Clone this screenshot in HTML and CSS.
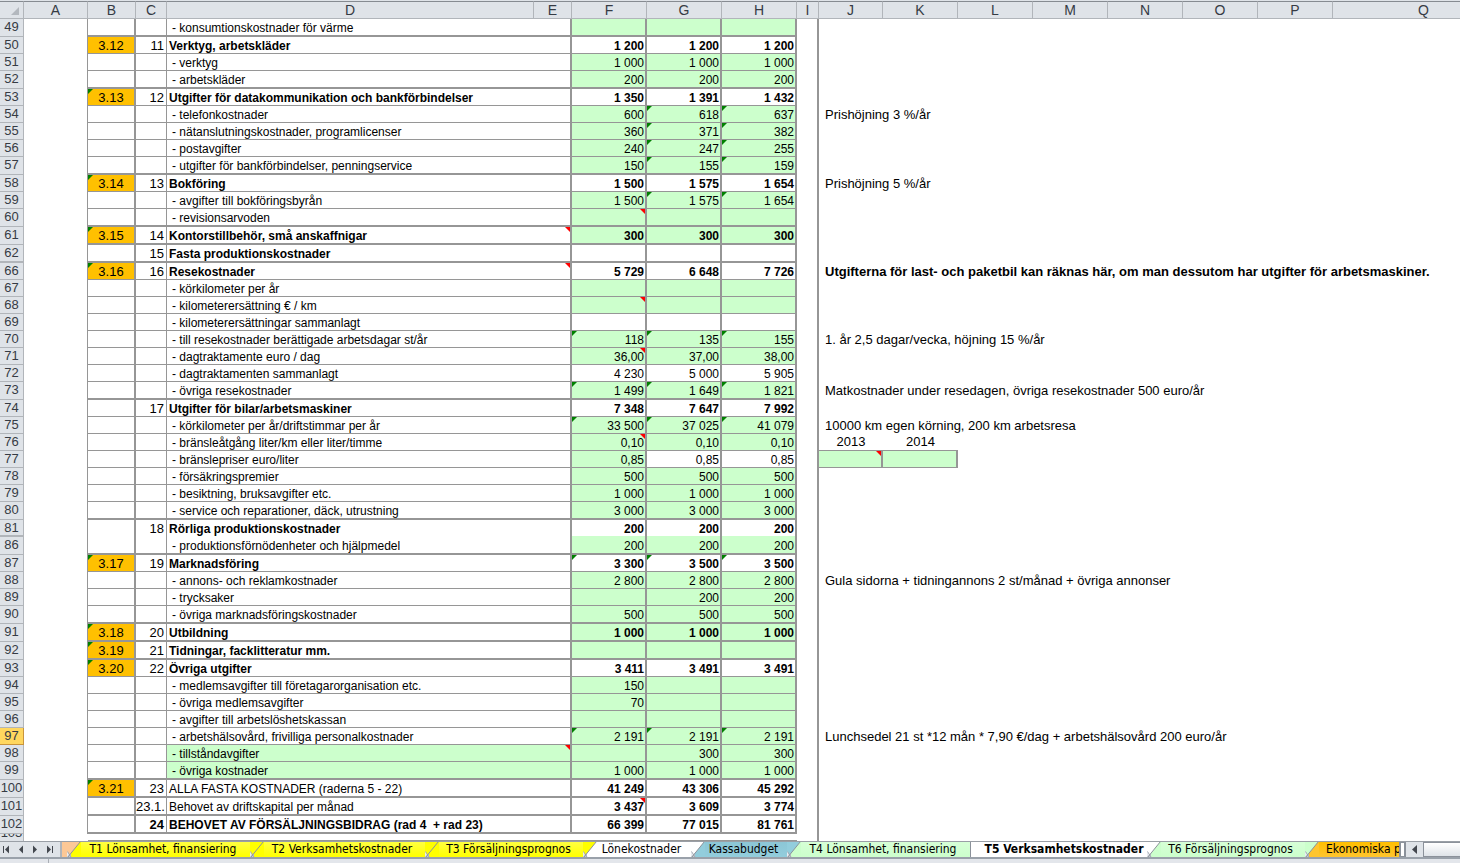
FILE: index.html
```html
<!DOCTYPE html>
<html lang="sv">
<head>
<meta charset="utf-8">
<title>T5 Verksamhetskostnader</title>
<link rel="stylesheet" href="styles.css">
</head>
<body>
<main class="sheet">
<table class="grid">
<colgroup>
<col class="w-row"><col class="w-a"><col class="w-b"><col class="w-c"><col class="w-d"><col class="w-e"><col class="w-n"><col class="w-n"><col class="w-n"><col class="w-i"><col class="w-a"><col class="w-n"><col class="w-n"><col class="w-n"><col class="w-n"><col class="w-n"><col class="w-n"><col>
</colgroup>
<thead>
<tr><th class="corner"><svg width="8" height="8" viewBox="0 0 8 8" aria-hidden="true"><path d="M8 0V8H0Z" fill="#b3b8be"/></svg></th><th scope="col">A</th><th scope="col">B</th><th scope="col">C</th><th scope="col">D</th><th scope="col">E</th><th scope="col">F</th><th scope="col">G</th><th scope="col">H</th><th scope="col">I</th><th scope="col">J</th><th scope="col">K</th><th scope="col">L</th><th scope="col">M</th><th scope="col">N</th><th scope="col">O</th><th scope="col">P</th><th scope="col" class="col-q">Q</th></tr>
</thead>
<tbody>
<tr class="thick"><th scope="row">49</th><td></td><td></td><td></td><td colspan="2">- konsumtionskostnader för värme</td><td class="in"></td><td class="in"></td><td class="in"></td><td></td><td colspan="8"></td></tr>
<tr class="head"><th scope="row">50</th><td></td><td class="ref">3.12</td><td>11</td><td colspan="2">Verktyg, arbetskläder</td><td>1 200</td><td>1 200</td><td>1 200</td><td></td><td colspan="8"></td></tr>
<tr><th scope="row">51</th><td></td><td></td><td></td><td colspan="2">- verktyg</td><td class="in">1 000</td><td class="in">1 000</td><td class="in">1 000</td><td></td><td colspan="8"></td></tr>
<tr class="thick"><th scope="row">52</th><td></td><td></td><td></td><td colspan="2">- arbetskläder</td><td class="in">200</td><td class="in">200</td><td class="in">200</td><td></td><td colspan="8"></td></tr>
<tr class="head"><th scope="row">53</th><td></td><td class="ref flag">3.13</td><td>12</td><td colspan="2">Utgifter för datakommunikation och bankförbindelser</td><td>1 350</td><td>1 391</td><td>1 432</td><td></td><td colspan="8"></td></tr>
<tr><th scope="row">54</th><td></td><td></td><td></td><td colspan="2">- telefonkostnader</td><td class="in">600</td><td class="in flag">618</td><td class="in flag">637</td><td></td><td colspan="8">Prishöjning 3 %/år</td></tr>
<tr><th scope="row">55</th><td></td><td></td><td></td><td colspan="2">- nätanslutningskostnader, programlicenser</td><td class="in">360</td><td class="in flag">371</td><td class="in flag">382</td><td></td><td colspan="8"></td></tr>
<tr><th scope="row">56</th><td></td><td></td><td></td><td colspan="2">- postavgifter</td><td class="in">240</td><td class="in flag">247</td><td class="in flag">255</td><td></td><td colspan="8"></td></tr>
<tr class="thick"><th scope="row">57</th><td></td><td></td><td></td><td colspan="2">- utgifter för bankförbindelser, penningservice</td><td class="in">150</td><td class="in flag">155</td><td class="in flag">159</td><td></td><td colspan="8"></td></tr>
<tr class="head"><th scope="row">58</th><td></td><td class="ref flag">3.14</td><td>13</td><td colspan="2">Bokföring</td><td>1 500</td><td>1 575</td><td>1 654</td><td></td><td colspan="8">Prishöjning 5 %/år</td></tr>
<tr><th scope="row">59</th><td></td><td></td><td></td><td colspan="2">- avgifter till bokföringsbyrån</td><td class="in">1 500</td><td class="in flag">1 575</td><td class="in flag">1 654</td><td></td><td colspan="8"></td></tr>
<tr class="thick"><th scope="row">60</th><td></td><td></td><td></td><td colspan="2">- revisionsarvoden</td><td class="in note"></td><td class="in"></td><td class="in"></td><td></td><td colspan="8"></td></tr>
<tr class="head thick"><th scope="row">61</th><td></td><td class="ref flag">3.15</td><td>14</td><td colspan="2" class="note">Kontorstillbehör, små anskaffnigar</td><td class="in">300</td><td class="in">300</td><td class="in">300</td><td></td><td colspan="8"></td></tr>
<tr class="head thick gap"><th scope="row">62</th><td></td><td></td><td>15</td><td colspan="2">Fasta produktionskostnader</td><td></td><td></td><td></td><td></td><td colspan="8"></td></tr>
<tr class="head"><th scope="row">66</th><td></td><td class="ref flag">3.16</td><td>16</td><td colspan="2" class="note">Resekostnader</td><td>5 729</td><td>6 648</td><td>7 726</td><td></td><td colspan="8" class="strong">Utgifterna för last- och paketbil kan räknas här, om man dessutom har utgifter för arbetsmaskiner.</td></tr>
<tr><th scope="row">67</th><td></td><td></td><td></td><td colspan="2">- körkilometer per år</td><td class="in"></td><td class="in"></td><td class="in"></td><td></td><td colspan="8"></td></tr>
<tr><th scope="row">68</th><td></td><td></td><td></td><td colspan="2">- kilometerersättning € / km</td><td class="in note"></td><td class="in"></td><td class="in"></td><td></td><td colspan="8"></td></tr>
<tr><th scope="row">69</th><td></td><td></td><td></td><td colspan="2">- kilometerersättningar sammanlagt</td><td></td><td></td><td></td><td></td><td colspan="8"></td></tr>
<tr><th scope="row">70</th><td></td><td></td><td></td><td colspan="2">- till resekostnader berättigade arbetsdagar st/år</td><td class="in flag">118</td><td class="in flag">135</td><td class="in flag">155</td><td></td><td colspan="8">1. år 2,5 dagar/vecka, höjning 15 %/år</td></tr>
<tr><th scope="row">71</th><td></td><td></td><td></td><td colspan="2">- dagtraktamente euro / dag</td><td class="in note">36,00</td><td class="in">37,00</td><td class="in">38,00</td><td></td><td colspan="8"></td></tr>
<tr><th scope="row">72</th><td></td><td></td><td></td><td colspan="2">- dagtraktamenten sammanlagt</td><td>4 230</td><td>5 000</td><td>5 905</td><td></td><td colspan="8"></td></tr>
<tr class="thick"><th scope="row">73</th><td></td><td></td><td></td><td colspan="2">- övriga resekostnader</td><td class="in flag">1 499</td><td class="in flag">1 649</td><td class="in flag">1 821</td><td></td><td colspan="8">Matkostnader under resedagen, övriga resekostnader 500 euro/år</td></tr>
<tr class="head"><th scope="row">74</th><td></td><td></td><td>17</td><td colspan="2">Utgifter för bilar/arbetsmaskiner</td><td>7 348</td><td>7 647</td><td>7 992</td><td></td><td colspan="8"></td></tr>
<tr><th scope="row">75</th><td></td><td></td><td></td><td colspan="2">- körkilometer per år/driftstimmar per år</td><td class="in flag">33 500</td><td class="in flag">37 025</td><td class="in flag">41 079</td><td></td><td colspan="8">10000 km egen körning, 200 km arbetsresa</td></tr>
<tr><th scope="row">76</th><td></td><td></td><td></td><td colspan="2">- bränsleåtgång liter/km eller liter/timme</td><td class="in note">0,10</td><td class="in">0,10</td><td class="in">0,10</td><td></td><td class="year">2013</td><td class="year">2014</td><td colspan="6"></td></tr>
<tr><th scope="row">77</th><td></td><td></td><td></td><td colspan="2">- bränslepriser euro/liter</td><td class="in">0,85</td><td>0,85</td><td>0,85</td><td></td><td class="in boxed note"></td><td class="in boxed"></td><td colspan="6"></td></tr>
<tr><th scope="row">78</th><td></td><td></td><td></td><td colspan="2">- försäkringspremier</td><td class="in">500</td><td class="in">500</td><td class="in">500</td><td></td><td colspan="8"></td></tr>
<tr><th scope="row">79</th><td></td><td></td><td></td><td colspan="2">- besiktning, bruksavgifter etc.</td><td class="in">1 000</td><td class="in">1 000</td><td class="in">1 000</td><td></td><td colspan="8"></td></tr>
<tr class="thick"><th scope="row">80</th><td></td><td></td><td></td><td colspan="2">- service och reparationer, däck, utrustning</td><td class="in">3 000</td><td class="in">3 000</td><td class="in">3 000</td><td></td><td colspan="8"></td></tr>
<tr class="head gap open"><th scope="row">81</th><td></td><td></td><td>18</td><td colspan="2">Rörliga produktionskostnader</td><td>200</td><td>200</td><td>200</td><td></td><td colspan="8"></td></tr>
<tr class="thick"><th scope="row">86</th><td></td><td></td><td></td><td colspan="2">- produktionsförnödenheter och hjälpmedel</td><td class="in">200</td><td class="in">200</td><td class="in">200</td><td></td><td colspan="8"></td></tr>
<tr class="head"><th scope="row">87</th><td></td><td class="ref flag">3.17</td><td>19</td><td colspan="2">Marknadsföring</td><td class="flag">3 300</td><td class="flag">3 500</td><td class="flag">3 500</td><td></td><td colspan="8"></td></tr>
<tr><th scope="row">88</th><td></td><td></td><td></td><td colspan="2">- annons- och reklamkostnader</td><td class="in">2 800</td><td class="in">2 800</td><td class="in">2 800</td><td></td><td colspan="8">Gula sidorna + tidningannons 2 st/månad + övriga annonser</td></tr>
<tr><th scope="row">89</th><td></td><td></td><td></td><td colspan="2">- trycksaker</td><td class="in"></td><td class="in">200</td><td class="in">200</td><td></td><td colspan="8"></td></tr>
<tr class="thick"><th scope="row">90</th><td></td><td></td><td></td><td colspan="2">- övriga marknadsföringskostnader</td><td class="in">500</td><td class="in">500</td><td class="in">500</td><td></td><td colspan="8"></td></tr>
<tr class="head thick"><th scope="row">91</th><td></td><td class="ref flag">3.18</td><td>20</td><td colspan="2">Utbildning</td><td class="in">1 000</td><td class="in">1 000</td><td class="in">1 000</td><td></td><td colspan="8"></td></tr>
<tr class="head thick"><th scope="row">92</th><td></td><td class="ref flag">3.19</td><td>21</td><td colspan="2">Tidningar, facklitteratur mm.</td><td class="in"></td><td class="in"></td><td class="in"></td><td></td><td colspan="8"></td></tr>
<tr class="head"><th scope="row">93</th><td></td><td class="ref flag">3.20</td><td>22</td><td colspan="2">Övriga utgifter</td><td>3 411</td><td>3 491</td><td>3 491</td><td></td><td colspan="8"></td></tr>
<tr><th scope="row">94</th><td></td><td></td><td></td><td colspan="2">- medlemsavgifter till företagarorganisation etc.</td><td class="in">150</td><td class="in"></td><td class="in"></td><td></td><td colspan="8"></td></tr>
<tr><th scope="row">95</th><td></td><td></td><td></td><td colspan="2">- övriga medlemsavgifter</td><td class="in">70</td><td class="in"></td><td class="in"></td><td></td><td colspan="8"></td></tr>
<tr><th scope="row">96</th><td></td><td></td><td></td><td colspan="2">- avgifter till arbetslöshetskassan</td><td class="in"></td><td class="in"></td><td class="in"></td><td></td><td colspan="8"></td></tr>
<tr class="current"><th scope="row">97</th><td></td><td></td><td></td><td colspan="2">- arbetshälsovård, frivilliga personalkostnader</td><td class="in flag">2 191</td><td class="in flag">2 191</td><td class="in flag">2 191</td><td></td><td colspan="8">Lunchsedel 21 st *12 mån * 7,90 €/dag + arbetshälsovård 200 euro/år</td></tr>
<tr><th scope="row">98</th><td></td><td></td><td></td><td colspan="2" class="in note">- tillståndavgifter</td><td class="in"></td><td class="in">300</td><td class="in">300</td><td></td><td colspan="8"></td></tr>
<tr class="thick"><th scope="row">99</th><td></td><td></td><td></td><td colspan="2" class="in">- övriga kostnader</td><td class="in">1 000</td><td class="in">1 000</td><td class="in">1 000</td><td></td><td colspan="8"></td></tr>
<tr class="head plain thick"><th scope="row">100</th><td></td><td class="ref flag">3.21</td><td>23</td><td colspan="2">ALLA FASTA KOSTNADER (raderna 5 - 22)</td><td>41 249</td><td>43 306</td><td>45 292</td><td></td><td colspan="8"></td></tr>
<tr class="head plain thick"><th scope="row">101</th><td></td><td></td><td>23.1.</td><td colspan="2">Behovet av driftskapital per månad</td><td class="note">3 437</td><td>3 609</td><td>3 774</td><td></td><td colspan="8"></td></tr>
<tr class="head thick"><th scope="row">102</th><td></td><td></td><td class="strong">24</td><td colspan="2">BEHOVET AV FÖRSÄLJNINGSBIDRAG (rad 4 &nbsp;+ rad 23)</td><td>66 399</td><td>77 015</td><td>81 761</td><td></td><td colspan="8"></td></tr>
<tr class="short"><th scope="row"><span>103</span></th><td></td><td></td><td></td><td colspan="2"></td><td></td><td></td><td></td><td></td><td colspan="8"></td></tr>
</tbody>
</table>
</main>

<svg class="defs" width="0" height="0" aria-hidden="true">
<defs>
<symbol id="edge" viewBox="0 0 14 15"><path d="M14 0V15H1L13 0Z"/><path d="M0 9L0 15H3Z" fill="#e8ecf1"/><path d="M0 15L4 11V15Z" fill="#c5cbd3"/><path d="M.5 9.500L4 15" stroke="#a3a9b2" fill="none"/><path d="M.5 15.500L13.500-.5" stroke="#8b919a" fill="none"/></symbol>
</defs>
</svg>

<nav class="tabbar" aria-label="Kalkylblad">
<div class="arrows">
<button type="button" aria-label="Första bladet"><svg width="8" height="9" viewBox="0 0 8 9"><path d="M1.500 1V8" stroke="#43474e"/><path d="M3 4.500L7 .5V8.500Z"/></svg></button>
<button type="button" aria-label="Föregående blad"><svg width="8" height="9" viewBox="0 0 8 9"><path d="M2 4.500L6 .5V8.500Z"/></svg></button>
<button type="button" aria-label="Nästa blad"><svg width="8" height="9" viewBox="0 0 8 9"><path d="M6 4.500L2 .5V8.500Z"/></svg></button>
<button type="button" aria-label="Sista bladet"><svg width="8" height="9" viewBox="0 0 8 9"><path d="M6.500 1V8" stroke="#43474e"/><path d="M5 4.500L1 .5V8.500Z"/></svg></button>
</div>
<div class="tabs">
<span class="tab-rest peach"></span>
<button type="button" class="tab yellow after-peach t1"><svg class="edge"><use href="#edge"/></svg><span>T1 Lönsamhet, finansiering</span></button>
<button type="button" class="tab yellow after-yellow t2"><svg class="edge"><use href="#edge"/></svg><span>T2 Verksamhetskostnader</span></button>
<button type="button" class="tab yellow after-yellow t3"><svg class="edge"><use href="#edge"/></svg><span>T3 Försäljningsprognos</span></button>
<button type="button" class="tab white after-yellow t-lon"><svg class="edge"><use href="#edge"/></svg><span>Lönekostnader</span></button>
<button type="button" class="tab blue after-white t-kassa"><svg class="edge"><use href="#edge"/></svg><span>Kassabudget</span></button>
<button type="button" class="tab green after-blue t4"><svg class="edge"><use href="#edge"/></svg><span>T4 Lönsamhet, finansiering</span></button>
<button type="button" class="tab white active t5" aria-current="page"><span>T5 Verksamhetskostnader</span></button>
<button type="button" class="tab green after-white t6"><svg class="edge"><use href="#edge"/></svg><span>T6 Försäljningsprognos</span></button>
<button type="button" class="tab orange after-green t-eko"><svg class="edge"><use href="#edge"/></svg><span>Ekonomiska p</span></button>
</div>
<div class="scroller">
<span class="splitter"></span>
<button type="button" class="scroll-left" aria-label="Rulla åt vänster"><svg width="8" height="9" viewBox="0 0 8 9"><path d="M1 4.500L6 0V9Z"/></svg></button>
<span class="thumb"></span>
</div>
</nav>
<footer class="status"><span class="status-cell"></span></footer>
</body>
</html>
```
FILE: styles.css
```css
* { box-sizing: border-box; }

body {
  margin: 0;
  height: 100vh;
  display: flex;
  flex-direction: column;
  overflow: hidden;
  background: #fff;
  color: #000;
  font: 12px/16px "Liberation Sans", Arial, sans-serif;
}

button {
  border: 0;
  padding: 0;
  background: none;
  color: inherit;
  font: inherit;
}

.sheet {
  flex: 1;
  min-height: 0;
  overflow: hidden;
  border-top: 1px solid #dfe3e8;
}

/* Grid */
.grid {
  width: 100%;
  table-layout: fixed;
  border-collapse: separate;
  border-spacing: 0;
}

.w-row { width: 24px; }
.w-a { width: 64px; }
.w-b { width: 48px; }
.w-c { width: 31px; }
.w-d { width: 367px; }
.w-e { width: 38px; }
.w-n { width: 75px; }
.w-i { width: 22px; }

th {
  padding: 0;
  background: #dfe3e8;
  border-right: 1px solid #b1b5ba;
  border-bottom: 1px solid #b1b5ba;
  color: #363b44;
  font-size: 14px;
  font-weight: 400;
}

thead th {
  height: 18px;
  border-top: 1px solid #868b91;
  line-height: 16px;
}

.corner svg { display: block; margin: 2px 4px 0 auto; }
.col-q { padding-left: 54px; border-right: 0; }

tbody th {
  font-size: 13px;
  text-align: center;
  vertical-align: top;
  white-space: nowrap;
}

td {
  position: relative;
  height: 17px;
  padding: 0;
  border: 0 solid #969696;
  line-height: 14px;
  vertical-align: bottom;
  white-space: nowrap;
}

.thick td { height: 18px; }
td:nth-child(n+3):nth-child(-n+8) { border-bottom-width: 1px; }
.thick td:nth-child(n+3):nth-child(-n+8) { border-bottom-width: 2px; }

td:nth-child(2) { border-right-width: 1px; }
td:nth-child(3) { border-right-width: 2px; text-align: center; font-size: 13px; }
td:nth-child(4) { border-right-width: 1px; padding-right: 2px; text-align: right; font-size: 13px; }
td:nth-child(5) { border-right-width: 2px; padding-left: 5px; }
td:nth-child(n+6):nth-child(-n+8) { border-right-width: 2px; padding-right: 1px; text-align: right; }
td:nth-child(9) { border-right-width: 2px; }
td:nth-child(n+10) { padding-left: 6px; font-size: 13px; line-height: 16px; }
.thick td:nth-child(n+10) { padding-bottom: 1px; }

.head td:nth-child(n+5):nth-child(-n+8) { font-weight: 700; }
.head td:nth-child(5) { padding-left: 2px; }
.head.plain td:nth-child(5) { font-weight: 400; }
.grid .strong { font-weight: 700; }

.in { background: #cfc; }
.ref { background: #ffc000; }
.grid .year { padding: 0; border-bottom-width: 1px; text-align: center; }
.grid .boxed { border-right-width: 2px; border-bottom-width: 1px; }

.gap th { border-bottom-width: 2px; }
.open th { line-height: 15px; }
.open td:nth-child(n+3):nth-child(-n+8) { border-bottom-width: 0; padding-bottom: 1px; }
.open td:nth-child(n+6):nth-child(-n+8) { box-shadow: inset 0 -1px #cfc; }

.current th {
  background: #ffd75f;
  border-color: #c9943c;
}

.flag::before {
  content: "";
  position: absolute;
  top: 0;
  left: 0;
  width: 5px;
  height: 5px;
  background: #008000;
  clip-path: polygon(0 0, 100% 0, 0 100%);
}

.note::after {
  content: "";
  position: absolute;
  top: 0;
  right: 0;
  width: 5px;
  height: 5px;
  background: #f00;
  clip-path: polygon(0 0, 100% 0, 100% 100%);
}

.short td { height: 7px; }
.short td:nth-child(n+2):nth-child(-n+8) { border-right-width: 0; }
.short td:nth-child(4) { border-right-width: 1px; }
.short th { border-bottom: 0; }
.short span {
  display: flex;
  align-items: flex-end;
  justify-content: center;
  height: 7px;
  overflow: hidden;
}

/* Sheet tabs */
.defs { position: absolute; }

.tabbar {
  display: flex;
  flex: none;
  height: 18px;
  border-top: 1px solid #9a9fa6;
  border-bottom: 2px solid #9aa1aa;
  background: #dfe3e8;
  font: 12px/15px "DejaVu Sans Condensed", "DejaVu Sans", sans-serif;
}

.arrows {
  display: flex;
  flex: none;
  width: 62px;
  padding-left: 2px;
  border-right: 2px solid #b1b5ba;
}

.arrows button { display: flex; width: 15px; align-items: center; }
.arrows svg, .scroll-left svg { fill: #43474e; }

.tabs { display: flex; flex: 1; min-width: 0; overflow: hidden; }

.tab {
  display: flex;
  flex: none;
  height: 15px;
  background: linear-gradient(var(--top), var(--fill));
  white-space: nowrap;
}

.tab span { flex: 1; padding-right: 5px; text-align: center; }
.edge { flex: none; width: 14px; height: 15px; background: var(--prev); fill: var(--fill); }
.tab-rest { flex: none; width: 5px; background: var(--fill); }

.peach { --fill: #fcc896; }
.yellow { --fill: #ff0; --top: #ffff40; }
.white { --fill: #fff; --top: #fff; }
.blue { --fill: #92cddc; --top: #8cc6d6; }
.green { --fill: #cfc; --top: #d6ffd6; }
.orange { --fill: #ffc52e; --top: #ffbe00; }
.after-peach { --prev: #fcc896; }
.after-yellow { --prev: #ff0; }
.after-white { --prev: #fff; }
.after-blue { --prev: #92cddc; }
.after-green { --prev: #cfc; }

.t1 { width: 183px; }
.t2 { width: 175px; }
.t3 { width: 158px; }
.t-lon { width: 108px; }
.t-kassa { width: 96px; }
.t4 { width: 184px; border-right: 1px solid #8b919a; }
.t5 { width: 176px; }
.t6 { width: 158px; }
.tab.active span { padding: 0 0 0 10px; }
.t-eko span { padding-left: 7px; }
.active { font-weight: 700; }

.scroller { display: flex; flex: none; width: 61px; }
.splitter { width: 7px; border: 2px solid #8b919a; border-width: 1px 2px; background: #fff; }
.scroll-left { display: flex; width: 17px; align-items: center; justify-content: center; }
.thumb { flex: 1; border: 1px solid #8b919a; border-right: 0; background: linear-gradient(#fff, #dfe3e8); }

.status { flex: none; height: 4px; background: #e3e6eb; }
.status-cell { display: block; width: 49px; height: 4px; border-right: 1px solid #a9aeb5; }
```
